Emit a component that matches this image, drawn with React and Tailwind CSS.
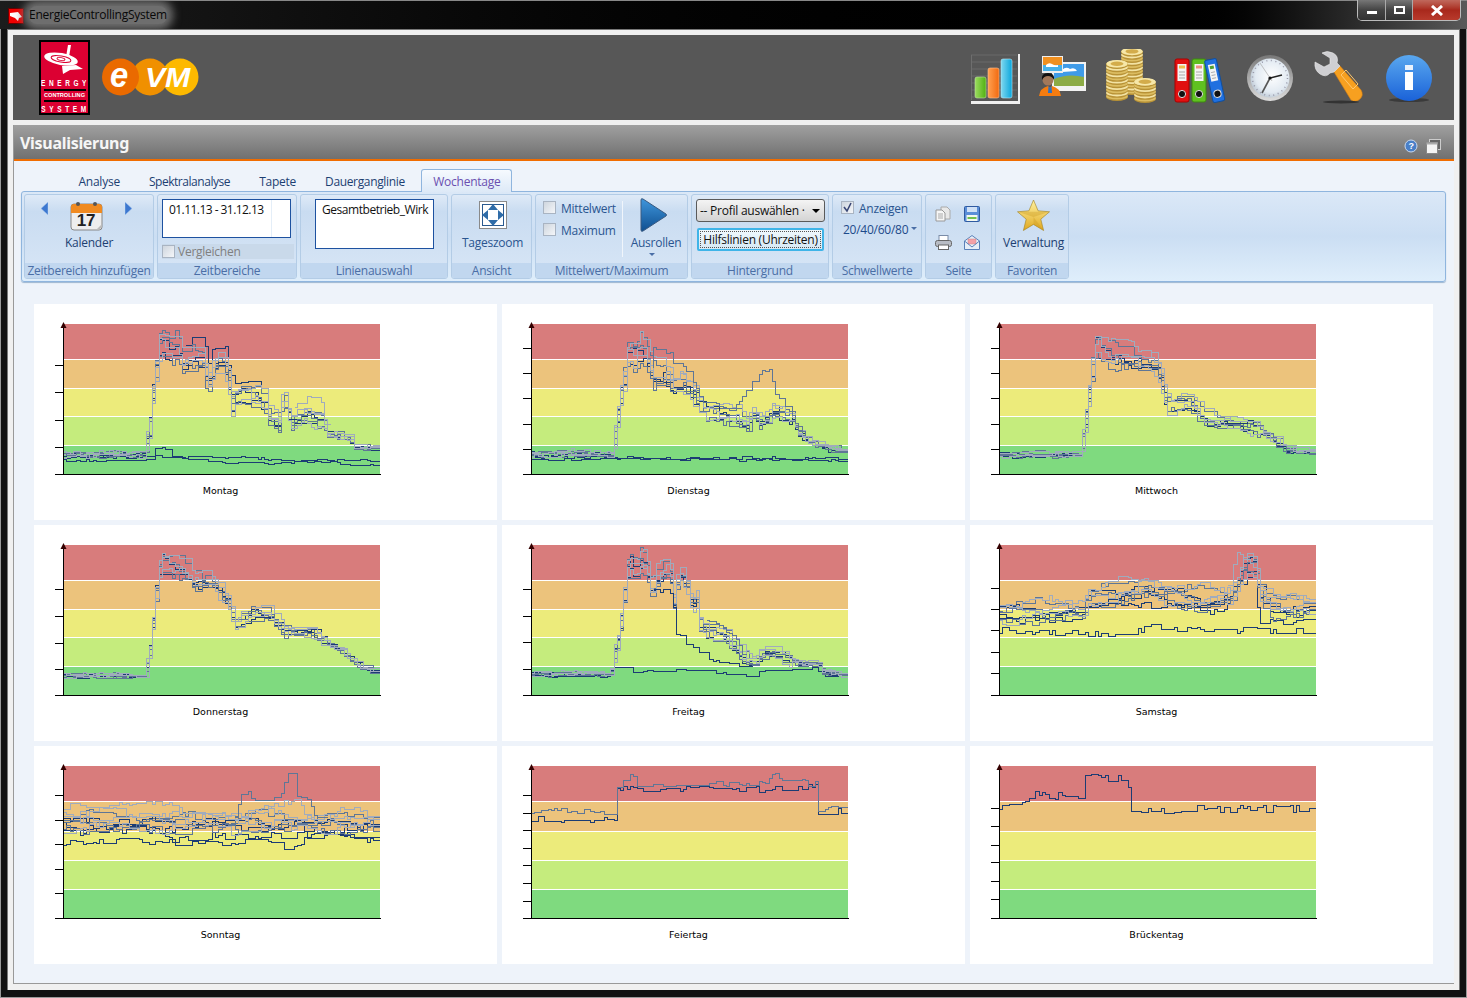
import React from 'react'

const rng = (seed) => () => {
  seed = (seed + 0x6d2b79f5) | 0
  let t = Math.imul(seed ^ (seed >>> 15), 1 | seed)
  t = (t + Math.imul(t ^ (t >>> 7), 61 | t)) ^ t
  return ((t ^ (t >>> 14)) >>> 0) / 4294967296
}

const interp = (p, x) => {
  if (x <= p[0][0]) return p[0][1]
  for (let i = 1; i < p.length; i++) {
    if (x <= p[i][0]) {
      const a = p[i - 1], b = p[i]
      return a[1] + ((b[1] - a[1]) * (x - a[0])) / (b[0] - a[0] || 1)
    }
  }
  return p[p.length - 1][1]
}

const DARK = '#1c3c74'
const MID = '#5f7696'
const LIGHT = '#a0abbd'

// step line through a day's profile, one step per quarter hour (x and y in plot pixels)
const stepLine = (points, seed, jitter, c, offset = () => 0, noise = () => 1) => {
  const r = rng(seed)
  const from = points[0][0]
  const to = points[points.length - 1][0]
  let d = ''
  let y = null
  for (let i = 0; i < 96; i++) {
    const x = (i * 317) / 96
    if (x < from || x > to) continue
    const target = interp(points, x) + offset(x)
    if (y === null || Math.abs(target - y) > 6 || r() > 0.45) y = target + (r() - 0.5) * jitter * noise(x)
    const px = Math.round(x) + 0.5
    const py = Math.max(1, Math.round(y)) + 0.5
    d += d === '' ? `M${px} ${py}` : `V${py}H${px}`
  }
  return { d: to === 317 ? d + 'H317' : d, c }
}

const dayEnv = (x) => (x < 84 ? 0.2 : x < 175 ? 1 : x < 262 ? 0.65 : 0.2)
const flatEnv = () => 1

// bundle of weeks of the same weekday, they drift apart over the working day
const bundle = (points, seed, amp, jitter, env = dayEnv) => {
  const colors = [DARK, MID, DARK, MID, LIGHT, MID, LIGHT, LIGHT]
  const spread = [0.7, -0.6, 0.2, 1, -0.9, 0.45, -0.25, 0.8]
  return colors.map((c, i) =>
    stepLine(
      points,
      seed * 100 + i,
      jitter,
      c,
      (x) => amp * env(x) * (spread[i] * 0.75 + 0.45 * Math.sin(x / 13 + i * 1.9)),
      (x) => 0.4 + 0.6 * env(x),
    ),
  )
}

const W1 = [0, 24, 49, 74, 100, 125]
const CHARTS = [
  {
    name: 'Montag',
    ticks: [41, 68, 96, 123],
    lines: [
      stepLine([[0, 132], [83, 133], [90, 128], [100, 124], [110, 124], [112, 132], [170, 133], [230, 136], [317, 136]], 11, 3, DARK),
      stepLine([[0, 136], [84, 136], [92, 132], [140, 136], [180, 139], [260, 138], [317, 141]], 12, 3, DARK),
      stepLine([[120, 22], [127, 18], [137, 10], [145, 20], [148, 45], [150, 25], [165, 22], [168, 40], [175, 60], [195, 55], [205, 70]], 13, 2, DARK),
      ...bundle([[0, 130], [83, 130], [90, 95], [93, 60], [97, 34], [100, 12], [107, 22], [117, 20], [123, 38], [127, 32], [143, 34], [147, 60], [157, 36], [168, 46], [170, 78], [180, 66], [193, 70], [205, 80], [207, 90], [218, 99], [223, 70], [230, 99], [243, 88], [262, 96], [267, 109], [290, 114], [293, 123], [317, 123]], 1, 14, 8),
      stepLine([[230, 84], [243, 76], [250, 72], [258, 78], [263, 80], [264, 95], [270, 105]], 14, 2, LIGHT),
    ],
  },
  {
    name: 'Dienstag',
    ticks: W1.slice(1),
    lines: [
      stepLine([[0, 133], [317, 134]], 21, 3, DARK),
      stepLine([[0, 135], [140, 135], [317, 136]], 22, 3, DARK),
      ...bundle([[0, 129], [83, 129], [88, 94], [93, 63], [97, 46], [100, 20], [105, 30], [113, 20], [118, 30], [125, 50], [135, 50], [145, 60], [155, 58], [168, 72], [175, 85], [190, 88], [208, 92], [218, 100], [225, 88], [232, 98], [245, 85], [262, 90], [272, 112], [292, 122], [317, 128]], 2, 13, 8),
      stepLine([[122, 45], [125, 24], [135, 28], [142, 29], [145, 39], [150, 33], [160, 49], [168, 63], [175, 79], [188, 79], [202, 86], [212, 76], [222, 59], [235, 46], [242, 46], [247, 69], [258, 83], [265, 93], [272, 110]], 23, 2, MID),
    ],
  },
  {
    name: 'Mittwoch',
    ticks: W1.slice(1),
    lines: bundle([[0, 130], [83, 130], [88, 100], [92, 70], [96, 40], [100, 12], [110, 28], [130, 32], [160, 40], [167, 60], [170, 78], [190, 74], [210, 96], [230, 98], [260, 102], [290, 126], [317, 128]], 3, 13, 7),
  },
  {
    name: 'Donnerstag',
    ticks: [44, 71, 98, 124],
    lines: bundle([[0, 130], [83, 130], [90, 100], [94, 60], [98, 25], [102, 14], [120, 22], [135, 36], [150, 34], [168, 56], [175, 76], [190, 66], [205, 66], [225, 86], [250, 86], [280, 106], [300, 122], [317, 127]], 4, 10, 6),
  },
  {
    name: 'Freitag',
    ticks: [44, 71, 97, 124],
    lines: [
      stepLine([[0, 131], [82, 131], [84, 123], [90, 121], [95, 127], [150, 125], [200, 128], [222, 131], [224, 126], [290, 123], [292, 131], [317, 130]], 51, 2, DARK),
      ...bundle([[0, 128], [82, 128], [84, 112], [90, 92], [94, 62], [97, 35], [100, 14], [108, 22], [113, 12], [118, 18], [120, 38], [125, 45], [130, 28], [137, 22], [143, 30], [145, 58], [150, 30], [157, 34], [163, 60], [170, 50], [172, 80], [182, 88], [195, 88], [205, 100], [215, 112], [225, 116], [235, 106], [250, 108], [270, 118], [290, 118], [293, 126], [317, 130]], 5, 10, 6),
      stepLine([[120, 40], [125, 50], [135, 45], [143, 48], [146, 65], [146, 87], [155, 92], [162, 104], [170, 100], [172, 108], [185, 115], [205, 120], [215, 121], [222, 122]], 52, 2, DARK),
      stepLine([[172, 75], [190, 78], [200, 88], [210, 95], [215, 110]], 53, 2, MID),
    ],
  },
  {
    name: 'Samstag',
    ticks: [43, 64, 85, 107, 128],
    lines: [
      stepLine([[0, 85], [100, 89], [145, 85], [150, 80], [200, 85], [230, 85], [317, 85]], 61, 7, DARK),
      stepLine([[0, 72], [85, 76], [88, 60], [200, 60], [205, 66], [228, 66], [238, 40], [250, 35], [258, 38], [262, 70], [263, 75], [280, 78], [317, 70]], 62, 6, DARK),
      ...bundle([[0, 65], [88, 64], [90, 50], [120, 47], [145, 42], [175, 48], [200, 52], [225, 53], [236, 50], [243, 30], [250, 16], [260, 20], [262, 40], [275, 60], [290, 62], [317, 62]], 6, 11, 7, flatEnv),
      stepLine([[225, 42], [235, 40], [238, 20], [240, 7], [250, 15], [258, 25], [262, 40], [265, 50], [317, 52]], 63, 5, LIGHT),
    ],
  },
  {
    name: 'Sonntag',
    ticks: [29, 54, 78, 103, 127],
    lines: [
      stepLine([[0, 77], [100, 75], [135, 78], [150, 78], [210, 72], [225, 80], [240, 75], [258, 62], [290, 70], [317, 75]], 71, 8, DARK),
      stepLine([[0, 66], [100, 63], [115, 76], [130, 70], [300, 68], [317, 76]], 72, 8, DARK),
      ...bundle([[0, 54], [120, 55], [170, 55], [220, 55], [255, 56], [317, 55]], 7, 10, 8, flatEnv),
      stepLine([[0, 40], [15, 40], [30, 42], [60, 38], [85, 35], [115, 40], [118, 50], [180, 48], [200, 42], [225, 35], [240, 35], [245, 50], [317, 52]], 73, 6, LIGHT),
      stepLine([[170, 50], [176, 50], [180, 29], [187, 24], [193, 34], [207, 34], [222, 27], [227, 7], [235, 12], [238, 31], [250, 32], [252, 47], [265, 55]], 74, 2, MID),
    ],
  },
  {
    name: 'Feiertag',
    ticks: [29, 47, 64, 82, 99, 117, 135],
    lines: [
      stepLine([[0, 53], [88, 54], [89, 22], [160, 22], [240, 23], [288, 20], [289, 48], [317, 44]], 81, 6, DARK),
      stepLine([[0, 47], [20, 43], [40, 46], [88, 48], [89, 22], [100, 12], [105, 10], [108, 20], [120, 20], [180, 18], [240, 15], [245, 7], [255, 15], [288, 18], [290, 42], [317, 44]], 82, 7, MID),
    ],
  },
  {
    name: 'Brückentag',
    ticks: [42, 60, 79, 96, 115, 133],
    lines: [stepLine([[0, 42], [12, 38], [32, 38], [33, 30], [42, 25], [45, 30], [70, 28], [88, 30], [89, 8], [110, 9], [111, 14], [130, 12], [133, 22], [134, 43], [317, 42]], 91, 8, DARK)],
  },
]

const Chart = ({ name, lines, ticks, tall }) => {
  const b = tall ? [0, 36, 66, 95, 124, 152] : [0, 36, 65, 93, 122, 150]
  const colors = ['#d87c7c', '#ecc37c', '#eceb7b', '#c5ec7d', '#7fda7f']
  const h = b[5]
  return (
    <div className="ml-[20px] flex w-[333px] flex-col">
      <svg width="333" height={h + 4} className="block" shapeRendering="crispEdges">
        <g transform="translate(9,2)">
          {colors.map((c, i) => (
            <rect key={c} x="0" y={b[i]} width="317" height={b[i + 1] - b[i] - (i < 4 ? 1 : 0)} fill={c} />
          ))}
          <clipPath id={`clip-${name}`}>
            <rect x="0" y="0" width="317" height={h} />
          </clipPath>
          <g clipPath={`url(#clip-${name})`}>
            {lines.map((l, i) => (
              <path key={i} d={l.d} fill="none" stroke={l.c} strokeWidth="1" />
            ))}
          </g>
          {ticks.map((y) => (
            <rect key={y} x="-8" y={y} width="8" height="1" fill="#000" />
          ))}
          <rect x="-8" y={h} width="326" height="1" fill="#000" />
          <rect x="0" y="0" width="1" height={h} fill="#000" />
          <path d="M0.5 -2L3.5 4H-2.5Z" fill="#300" shapeRendering="auto" />
        </g>
      </svg>
      <div className="mt-[8px] text-center text-[9.5px] leading-[14px] tracking-normal text-black [font-family:'DejaVu_Sans',sans-serif]">{name}</div>
    </div>
  )
}

const Logo = () => (
  <div className="flex h-[75px] w-[51px] flex-col items-center border-[2px] border-black bg-[#dc0032] text-white [font-family:'Liberation_Sans',sans-serif] tracking-normal">
    <svg width="47" height="36" viewBox="0 0 47 36" className="shrink-0">
      <path d="M27 3l3 0-2 12-3 0z" fill="#fff" />
      <ellipse cx="20" cy="17" rx="17" ry="6" fill="#fff" transform="rotate(10 20 17)" />
      <ellipse cx="20" cy="17" rx="10" ry="3" fill="none" stroke="#dc0032" strokeWidth="1" transform="rotate(10 20 17)" />
      <ellipse cx="20" cy="17" rx="4" ry="1.4" fill="none" stroke="#dc0032" strokeWidth="1" transform="rotate(10 20 17)" />
      <path d="M21 24l14-1 7 4-13 1-7 4z" fill="#fff" />
    </svg>
    <div className="pl-[2px] text-[6.5px] leading-[10px] font-bold tracking-[3.6px] [transform:scaleY(1.25)]">ENERGY</div>
    <div className="mt-[1px] w-[42px] border-y-[2px] border-black text-center text-[5.6px] leading-[9px] font-bold whitespace-nowrap">CONTROLLING</div>
    <div className="mt-[2px] pl-[2px] text-[6.5px] leading-[10px] font-bold tracking-[3.6px] [transform:scaleY(1.25)]">SYSTEM</div>
  </div>
)

const Evm = () => (
  <svg width="97" height="38" viewBox="0 0 97 38" className="ml-[12px] overflow-visible">
    <circle cx="78" cy="19" r="18.5" fill="#fdb900" />
    <circle cx="48" cy="19" r="18.5" fill="#f09000" />
    <circle cx="18.5" cy="19" r="18.5" fill="#ea6a00" />
    <text x="8" y="29" fontSize="35" fontWeight="700" fontStyle="italic" fill="#fff" fontFamily="'Liberation Sans',sans-serif" textLength="18" lengthAdjust="spacingAndGlyphs">e</text>
    <text x="43" y="29" fontSize="27" fontWeight="700" fontStyle="italic" fill="#fff" fontFamily="'Liberation Sans',sans-serif" textLength="45" lengthAdjust="spacingAndGlyphs">VM</text>
  </svg>
)

// top icons are drawn in screen coordinates, the viewBox cuts them out
const TopIcon = ({ x, w, ml, children }) => (
  <svg width={w} height="56" viewBox={`${x} 49 ${w} 56`} className="block" style={{ marginLeft: ml }}>
    {children}
  </svg>
)

const Coin = ({ x, y, n }) => (
  <g>
    {Array.from({ length: n }).map((_, i) => (
      <g key={i}>
        <ellipse cx={x} cy={y - i * 3.2} rx="11" ry="4" fill="#b89236" />
        <ellipse cx={x} cy={y - i * 3.2 - 1} rx="11" ry="3.6" fill={i % 2 ? '#f3e3a4' : '#dcbd62'} />
      </g>
    ))}
    <ellipse cx={x} cy={y - n * 3.2 + 2} rx="10.5" ry="3.8" fill="#f6e7a8" />
    <ellipse cx={x} cy={y - n * 3.2 + 2} rx="6.5" ry="2.2" fill="#d3ac4b" />
  </g>
)

const Binder = ({ x, w, c, d, label, rot }) => (
  <g transform={rot ? `rotate(${rot} ${x + w / 2} 82)` : undefined}>
    <rect x={x} y="59" width={w} height="43" rx="2" fill={c} stroke={d} />
    <rect x={x + 2.5} y="64" width={w - 5} height="17" fill="#f4f4f4" />
    <rect x={x + 4} y="65.5" width={w - 8} height="3" fill={label} />
    <path d={`M${x + 4} 72h${w - 8}M${x + 4} 75h${w - 8}M${x + 4} 78h${w - 8}`} stroke="#aaa" />
    <circle cx={x + w / 2} cy="94" r="3.6" fill="#111" stroke="#ddd" />
  </g>
)

const TopIcons = () => (
  <div className="ml-auto flex items-start pt-[9px] pr-[22px]">
    <TopIcon x={971} w={50} ml={0}>
      <defs>
        <linearGradient id="gb" x1="0" x2="1"><stop offset="0" stopColor="#7fd8ef" /><stop offset="1" stopColor="#0aa6dc" /></linearGradient>
        <linearGradient id="go" x1="0" x2="1"><stop offset="0" stopColor="#ffa050" /><stop offset="1" stopColor="#f26a10" /></linearGradient>
        <linearGradient id="gg" x1="0" x2="1"><stop offset="0" stopColor="#9cdc60" /><stop offset="1" stopColor="#50b010" /></linearGradient>
      </defs>
      <path d="M971 55h46M971 62h46M971 69h46M971 76h46M971 83h46M971 90h46M971 97h46" stroke="#6e6e6e" strokeWidth="0.8" />
      <path d="M971.5 55v45" stroke="#6e6e6e" />
      <rect x="975" y="77" width="11" height="21" rx="2" fill="url(#gg)" stroke="#bde0a0" strokeWidth="0.6" />
      <rect x="988" y="68" width="11" height="30" rx="2" fill="url(#go)" stroke="#ffc090" strokeWidth="0.6" />
      <rect x="1001" y="59" width="11" height="39" rx="2" fill="url(#gb)" stroke="#b8eaf8" strokeWidth="0.6" />
      <path d="M1018 54v47h-47v3h49V54z" fill="#f0f0f0" />
    </TopIcon>
    <TopIcon x={1038} w={49} ml={17}>
      <rect x="1052" y="62" width="34" height="29" fill="#f2f2f2" />
      <rect x="1054" y="64" width="30" height="15" fill="#3f9be8" />
      <path d="M1062 70q4-4 8-1q5-2 7 2l-15 1z" fill="#fff" />
      <path d="M1054 79q14-6 30-2v9h-30z" fill="#8cab45" />
      <rect x="1042" y="56" width="21" height="17" fill="#eee" />
      <rect x="1043" y="57" width="19" height="8" fill="#f09020" />
      <rect x="1043" y="65" width="19" height="6" fill="#48b0e8" />
      <path d="M1046 65q3-3 6-1t6 1v2h-12z" fill="#fff" />
      <path d="M1039 96q1-8 9-10l2 2 2-2q8 2 9 10z" fill="#f57c10" />
      <path d="M1048.5 86l1.5 2 1.5-2 .5 7h-4z" fill="#2f70c0" />
      <circle cx="1048" cy="80" r="5.5" fill="#a2785a" />
      <path d="M1042 80q-1-7 6-7t6 7q-2-4-6-4t-6 4z" fill="#111" />
    </TopIcon>
    <TopIcon x={1105} w={53} ml={18}>
      <Coin x={1132} y={91} n={13} />
      <Coin x={1117} y={97} n={11} />
      <Coin x={1145} y={99} n={6} />
    </TopIcon>
    <TopIcon x={1174} w={57} ml={16}>
      <Binder x={1175} w={14} c="#e11010" d="#a00" label="#f0c050" />
      <Binder x={1192} w={14} c="#60c020" d="#3d8a10" label="#f09080" />
      <Binder x={1209} w={12} c="#2070e0" d="#1050a0" label="#50a030" rot={-12} />
    </TopIcon>
    <TopIcon x={1247} w={47} ml={16}>
      <defs>
        <radialGradient id="gc" cx="0.55" cy="0.45" r="0.6"><stop offset="0" stopColor="#fff" /><stop offset="0.7" stopColor="#e2eaf2" /><stop offset="1" stopColor="#b8c4d0" /></radialGradient>
        <linearGradient id="gr" x1="0" y1="0" x2="0" y2="1"><stop offset="0" stopColor="#777" /><stop offset="1" stopColor="#ddd" /></linearGradient>
      </defs>
      <circle cx="1270" cy="78" r="23" fill="url(#gr)" />
      <circle cx="1270" cy="78" r="19.5" fill="url(#gc)" />
      <circle cx="1270" cy="78" r="17.5" fill="none" stroke="#99a" strokeWidth="1.5" strokeDasharray="1 3.6" />
      <path d="M1270 78L1262 93" stroke="#555" strokeWidth="1.6" />
      <path d="M1270 78L1282 75" stroke="#222" strokeWidth="1.6" />
      <path d="M1272 81L1260 63" stroke="#aaa" strokeWidth="0.7" />
      <circle cx="1270" cy="78" r="1.6" fill="#111" />
    </TopIcon>
    <TopIcon x={1313} w={51} ml={19}>
      <path d="M1334 72l6-6 21 24q3 5-1 9t-9 1z" fill="#f7a020" stroke="#d88010" strokeWidth="0.6" />
      <path d="M1341 75l5-5 12 14-5 5z" fill="none" stroke="#ffc870" />
      <path d="M1334 72l6-6-3-3q2-7-4-10t-11 0l8 5v6l-6 3-9-5q-1 8 5 12t10-1z" fill="#cfcfd2" stroke="#eee" strokeWidth="0.6" />
      <ellipse cx="1341" cy="102" rx="18" ry="1.5" fill="#333" />
    </TopIcon>
    <TopIcon x={1386} w={46} ml={22}>
      <defs>
        <linearGradient id="gi" x1="0" y1="0" x2="0" y2="1"><stop offset="0" stopColor="#5aa8ef" /><stop offset="1" stopColor="#1a62d8" /></linearGradient>
      </defs>
      <ellipse cx="1409" cy="100" rx="20" ry="2" fill="#3a3a3a" />
      <circle cx="1409" cy="78" r="23" fill="url(#gi)" />
      <rect x="1405" y="65" width="8" height="5" fill="#eaf2fc" />
      <rect x="1405" y="72" width="8" height="18" fill="#fff" />
    </TopIcon>
  </div>
)

const WinBtn = ({ w, children, red }) => (
  <div className={`flex h-[20px] items-center justify-center border-r border-[#aaa] last:border-r-0 ${w} ${red ? 'bg-gradient-to-b from-[#c0685c] via-[#a8281c] to-[#b83a2c]' : 'bg-gradient-to-b from-[#777] via-[#444] to-[#333]'}`}>
    {children}
  </div>
)

const TitleBar = () => (
  <div className="flex h-[29px] shrink-0 items-start justify-between border-t-[1px] border-[#888] bg-gradient-to-r from-[#1c1c1c] from-0% via-[#000] via-80% to-[#5a5a5a] pl-[8px] pr-[6px]">
    <div className="flex items-center">
      <div className="mt-[6px] flex h-[16px] w-[16px] items-center justify-center border border-[#600] bg-[#f00000]">
        <svg width="14" height="12" viewBox="0 0 14 12"><path d="M1 3l8-1 4 5-3 1-1 3-3-3-5-2z" fill="#fff" /></svg>
      </div>
      <div className="mt-[5px] ml-[5px] rounded-[8px] bg-[#6e6e6e] text-[12px] leading-[18px] text-[#080808] shadow-[0_0_9px_6px_#6e6e6e] [font-family:'Open_Sans',sans-serif]">
        EnergieControllingSystem
      </div>
    </div>
    <div className="-mt-[1px] flex overflow-hidden rounded-b-[5px] border border-t-0 border-[#bbb]">
      <WinBtn w="w-[28px]"><div className="mt-[5px] h-[3px] w-[10px] bg-white" /></WinBtn>
      <WinBtn w="w-[27px]"><div className="h-[8px] w-[11px] border-[2px] border-white" /></WinBtn>
      <WinBtn w="w-[47px]" red>
        <svg width="14" height="11" viewBox="0 0 14 11"><path d="M2 1l10 9M12 1L2 10" stroke="#fff" strokeWidth="3" /></svg>
      </WinBtn>
    </div>
  </div>
)

const Group = ({ w, title, children, className = '' }) => (
  <div className={`flex h-[85px] shrink-0 flex-col overflow-hidden rounded-[3px] border border-[#b3cce6] bg-gradient-to-b from-[#dfeaf7] from-0% via-[#c9dcf1] via-20% to-[#d8e6f6] ${w}`}>
    <div className={`h-[68px] shrink-0 ${className}`}>{children}</div>
    <div className="h-[15px] bg-[#c1d7ef] text-center text-[12px] leading-[16px] text-[#4a6ea6]">{title}</div>
  </div>
)

const Check = ({ on }) => (
  <div className="flex h-[13px] w-[13px] shrink-0 items-center justify-center border border-[#a9b4c2] bg-gradient-to-br from-[#cfd6de] to-[#f4f6f9]">
    {on && <svg width="11" height="11" viewBox="0 0 11 11"><path d="M2 5l3 4 4-8" fill="none" stroke="#3c4a78" strokeWidth="1.6" /></svg>}
  </div>
)

const Arrow = ({ flip }) => (
  <svg width="8" height="13" viewBox="0 0 8 13">
    <path d={flip ? 'M8 0v13L1 6.5z' : 'M0 0v13L7 6.5z'} fill="#3d78d0" stroke="#a8c8ee" strokeWidth="0.5" />
  </svg>
)

const Calendar = () => (
  <svg width="33" height="30" viewBox="0 0 33 30">
    <rect x="1" y="3" width="31" height="26" rx="3" fill="#eeeeee" stroke="#888" />
    <path d="M1 6q0-3 3-3h25q3 0 3 3v6H1z" fill="#f08a20" />
    <circle cx="8" cy="3" r="2" fill="#555" /><circle cx="25" cy="3" r="2" fill="#555" />
    <text x="16" y="25" textAnchor="middle" fontSize="17" fontWeight="700" fill="#222" fontFamily="'Liberation Sans',sans-serif">17</text>
    <path d="M26 29l6-6v3l-3 3z" fill="#bbb" />
  </svg>
)

const ZoomIcon = () => (
  <svg width="28" height="28" viewBox="0 0 28 28">
    <rect x="0.5" y="0.5" width="27" height="27" fill="#fff" stroke="#8a8a8a" />
    <rect x="3.5" y="3.5" width="21" height="21" fill="none" stroke="#2a5a90" />
    <path d="M14 3l5 6H9zM14 25l5-6H9zM3 14l6-5v10zM25 14l-6-5v10z" fill="#2f6ca8" />
  </svg>
)

const Play = () => (
  <svg width="29" height="36" viewBox="0 0 29 36">
    <defs><linearGradient id="gp" x1="0" y1="0" x2="0" y2="1"><stop offset="0" stopColor="#3f96dc" /><stop offset="1" stopColor="#0f4f90" /></linearGradient></defs>
    <path d="M2 3q0-2 2-1l23 15q1 1 0 2L4 34q-2 1-2-1z" fill="url(#gp)" stroke="#3a5a80" />
  </svg>
)

const Star = () => (
  <svg width="33" height="33" viewBox="0 0 33 33">
    <defs><linearGradient id="gs" x1="0" y1="0" x2="0" y2="1"><stop offset="0" stopColor="#fff2a0" /><stop offset="1" stopColor="#e0a820" /></linearGradient></defs>
    <path d="M16.5 1l4.6 10.8 11.4 1-8.7 7.4 2.8 11.3-10.1-6.1-10.1 6.1 2.8-11.3L.5 12.8l11.4-1z" fill="url(#gs)" stroke="#a08020" strokeWidth="0.6" />
    <path d="M16.5 1v17l10.1 13.5-10.1-6.1zM32.5 12.8L16.5 18l-16-5.2z" fill="#c89820" opacity="0.35" />
  </svg>
)

const Copy = () => (
  <svg width="16" height="16" viewBox="0 0 16 16">
    <path d="M6 1h6l3 3v9H6z" fill="#e8e8e8" stroke="#aaa" />
    <path d="M1 4h6l3 3v8H1z" fill="#f6f6f6" stroke="#999" />
    <path d="M3 8h5M3 10h5M3 12h5" stroke="#aaa" />
  </svg>
)
const Save = () => (
  <svg width="16" height="16" viewBox="0 0 16 16">
    <rect x="0.5" y="0.5" width="15" height="15" rx="1" fill="#5a8ed8" stroke="#2f5aa0" />
    <rect x="3" y="1" width="10" height="5" fill="#cfe0f6" />
    <rect x="2.5" y="9" width="11" height="6" fill="#f4f8f0" />
    <rect x="3.5" y="11" width="9" height="2" fill="#70c050" />
  </svg>
)
const Printer = () => (
  <svg width="17" height="15" viewBox="0 0 17 15">
    <rect x="4" y="0.5" width="9" height="6" fill="#fff" stroke="#7a8ca8" />
    <rect x="0.5" y="5.5" width="16" height="6" rx="2" fill="#b8bcc4" stroke="#666" />
    <rect x="3.5" y="10" width="10" height="4.5" fill="#fff" stroke="#666" />
  </svg>
)
const Mail = () => (
  <svg width="16" height="15" viewBox="0 0 16 15">
    <path d="M0.5 6L8 0.5 15.5 6v8.5h-15z" fill="#e6eef8" stroke="#5a80b8" />
    <rect x="4" y="4" width="8" height="5" fill="#f4a0a8" stroke="#c88" strokeWidth="0.5" />
    <path d="M0.5 6l7.5 6 7.5-6" fill="none" stroke="#5a80b8" />
  </svg>
)

const Ribbon = () => (
  <div className="mr-[1px] flex h-[91px] shrink-0 gap-[3px] rounded-[3px] border border-[#8fb5de] bg-gradient-to-b from-[#dbe8f7] via-[#cbdef3] to-[#dfeefb] pl-[2px] pt-[2px] shadow-[0_1px_1px_#9db6d0]">
    <Group w="w-[130px]" title="Zeitbereich hinzufügen" className="flex flex-col items-center pt-[6px]">
      <div className="flex h-[30px] w-full items-start justify-between pl-[15px] pr-[20px]">
        <div className="mt-[1px]"><Arrow flip /></div>
        <Calendar />
        <div className="mt-[1px]"><Arrow /></div>
      </div>
      <div className="mt-[4px] text-[12px] leading-[16px] text-[#1d3f72]">Kalender</div>
    </Group>
    <Group w="w-[140px]" title="Zeitbereiche" className="pl-[4px] pt-[4px]">
      <div className="flex h-[39px] w-[129px] border border-[#1e52a0] bg-white">
        <div className="w-[109px] border-r border-[#e4eef8] pl-[6px] text-[12px] leading-[19px] tracking-[-0.55px] text-[#111] whitespace-nowrap">01.11.13 - 31.12.13</div>
      </div>
      <div className="mt-[6px] flex h-[15px] w-[132px] items-center gap-[3px] bg-[#c9d9ea]">
        <Check />
        <span className="text-[12px] text-[#808080]">Vergleichen</span>
      </div>
    </Group>
    <Group w="w-[148px]" title="Linienauswahl" className="pl-[14px] pt-[4px]">
      <div className="h-[50px] w-[119px] border border-[#1e52a0] bg-white pl-[6px] text-[12px] leading-[20px] tracking-[-0.45px] text-[#111] whitespace-nowrap">Gesamtbetrieb_Wirk</div>
    </Group>
    <Group w="w-[81px]" title="Ansicht" className="flex flex-col items-center pl-[2px] pt-[6px]">
      <ZoomIcon />
      <div className="mt-[6px] text-[12px] leading-[16px] text-[#2a5590]">Tageszoom</div>
    </Group>
    <Group w="w-[153px]" title="Mittelwert/Maximum" className="flex pl-[7px] pt-[6px]">
      <div className="flex w-[79px] flex-col gap-[9px]">
        <div className="flex h-[13px] items-center gap-[5px]"><Check /><span className="pt-[1px] text-[12px] leading-[15px] text-[#2a5590]">Mittelwert</span></div>
        <div className="flex h-[13px] items-center gap-[5px]"><Check /><span className="pt-[1px] text-[12px] leading-[15px] text-[#2a5590]">Maximum</span></div>
      </div>
      <div className="h-[56px] w-[1px] bg-[#f0f5fb]" />
      <div className="ml-[3px] flex w-[60px] flex-col items-center -mt-[4px]">
        <div className="-ml-[6px]"><Play /></div>
        <div className="mt-[2px] text-[12px] leading-[16px] text-[#2a5590]">Ausrollen</div>
        <div className="mt-[2px] -ml-[8px] h-0 w-0 border-x-[3px] border-t-[3px] border-x-transparent border-t-[#4a6ea6]" />
      </div>
    </Group>
    <Group w="w-[138px]" title="Hintergrund" className="pl-[4px] pt-[4px]">
      <div className="flex h-[23px] w-[129px] items-center justify-between rounded-[3px] border border-[#5a5a5a] bg-gradient-to-b from-[#f4f4f4] to-[#d4d4d4] pl-[3px] pr-[4px] text-[12px] text-[#111]">
        <span className="whitespace-nowrap">-- Profil auswählen ·</span>
        <div className="h-0 w-0 border-x-[4px] border-t-[4px] border-x-transparent border-t-black" />
      </div>
      <div className="mt-[6px] ml-[1px] flex h-[23px] w-[127px] items-center justify-center rounded-[2px] border-[2px] border-[#3fb4e8] bg-gradient-to-b from-[#f0f8fd] to-[#d6e8f4] text-[12px] text-[#111]">
        <span className="whitespace-nowrap border border-dotted border-[#555] px-[2px] leading-[15px]">Hilfslinien (Uhrzeiten)</span>
      </div>
    </Group>
    <Group w="w-[90px]" title="Schwellwerte" className="pl-[8px] pt-[6px]">
      <div className="flex h-[13px] items-center gap-[5px]"><Check on /><span className="pt-[1px] text-[12px] leading-[15px] text-[#2a5590]">Anzeigen</span></div>
      <div className="mt-[8px] ml-[2px] flex items-center gap-[3px] text-[12px] leading-[16px] text-[#1d4a8a]">
        20/40/60/80
        <div className="mb-[3px] h-0 w-0 border-x-[3px] border-t-[3px] border-x-transparent border-t-[#4a6ea6]" />
      </div>
    </Group>
    <Group w="w-[67px]" title="Seite" className="grid grid-cols-[29px_16px] content-start gap-y-[13px] pl-[9px] pt-[11px]">
      <Copy /><Save /><Printer /><Mail />
    </Group>
    <Group w="w-[74px]" title="Favoriten" className="flex flex-col items-center pl-[3px] pt-[4px]">
      <Star />
      <div className="mt-[3px] text-[12px] leading-[16px] text-[#1d3f72]">Verwaltung</div>
    </Group>
  </div>
)

const TABS = ['Analyse', 'Spektralanalyse', 'Tapete', 'Dauerganglinie']

export default function App() {
  return (
    <div className="flex h-[998px] w-[1467px] flex-col overflow-hidden bg-[#111] text-[12px] tracking-[-0.25px] shadow-[inset_0_0_0_1px_#999] [font-family:'Open_Sans',sans-serif]">
      <TitleBar />
      <div className="mx-[7px] flex h-[961px] shrink-0 flex-col border border-b-0 border-[#777] bg-[#f0f0f0] px-[5px] pt-[5px] pb-[6px]">
        <div className="flex h-[85px] shrink-0 items-start bg-[#575757] pl-[26px] pt-[5px]">
          <Logo />
          <div className="mt-[18px]"><Evm /></div>
          <TopIcons />
        </div>
        <div className="mt-[5px] flex min-h-0 flex-1 flex-col border-b border-l border-[#999]">
          <div className="flex h-[36px] shrink-0 items-center justify-between border-b-[2px] border-[#f06c00] bg-gradient-to-b from-[#a0a0a0] to-[#707070] pl-[6px] pr-[13px]">
            <span className="mt-[2px] text-[16px] font-bold tracking-[-0.3px] text-[#f6f6f6] [font-family:'Noto_Sans',sans-serif]">Visualisierung</span>
            <div className="mt-[8px] flex items-center gap-[8px]">
              <svg width="14" height="14" viewBox="0 0 14 14">
                <circle cx="7" cy="7" r="6" fill="#4a80c8" stroke="#c8d8f0" />
                <text x="7" y="10" textAnchor="middle" fontSize="9" fontWeight="700" fill="#fff" fontFamily="'Liberation Sans',sans-serif">?</text>
              </svg>
              <svg width="15" height="15" viewBox="0 0 15 15">
                <rect x="3.5" y="0.5" width="11" height="10" fill="#666" stroke="#ccc" />
                <rect x="0.5" y="3.5" width="11" height="11" fill="#f4f4f4" stroke="#888" />
                <rect x="0.5" y="3.5" width="11" height="2" fill="#aaa" />
              </svg>
            </div>
          </div>
          <div className="flex min-h-0 flex-1 flex-col bg-[#eef3fa] px-[7px] pt-[7px]">
            <div className="-mb-[1px] flex h-[24px] shrink-0 items-end pl-[43px]">
              {TABS.map((t) => (
                <div key={t} className={`h-[23px] px-[14.5px] text-[12px] leading-[26px] text-[#1d3f72] whitespace-nowrap ${t === 'Spektralanalyse' ? 'tracking-[-0.45px]' : ''} ${t === 'Dauerganglinie' ? 'tracking-[-0.35px]' : ''}`}>{t}</div>
              ))}
              <div className="relative z-10 ml-[2px] h-[23px] rounded-t-[3px] border border-b-0 border-[#8fb5de] bg-gradient-to-b from-[#f6fafe] to-[#dde9f7] px-[11px] text-[12px] leading-[23px] text-[#6a4fb0] whitespace-nowrap">Wochentage</div>
            </div>
            <Ribbon />
            <div className="mt-[22px] grid grid-cols-[463px_463px_463px] grid-rows-[216px_216px_218px] gap-[5px] pl-[13px]">
              {CHARTS.map((c, i) => (
                <div key={c.name} className="bg-white pt-[18px]">
                  <Chart name={c.name} lines={c.lines} ticks={c.ticks} tall={i > 5} />
                </div>
              ))}
            </div>
          </div>
        </div>
      </div>
    </div>
  )
}
